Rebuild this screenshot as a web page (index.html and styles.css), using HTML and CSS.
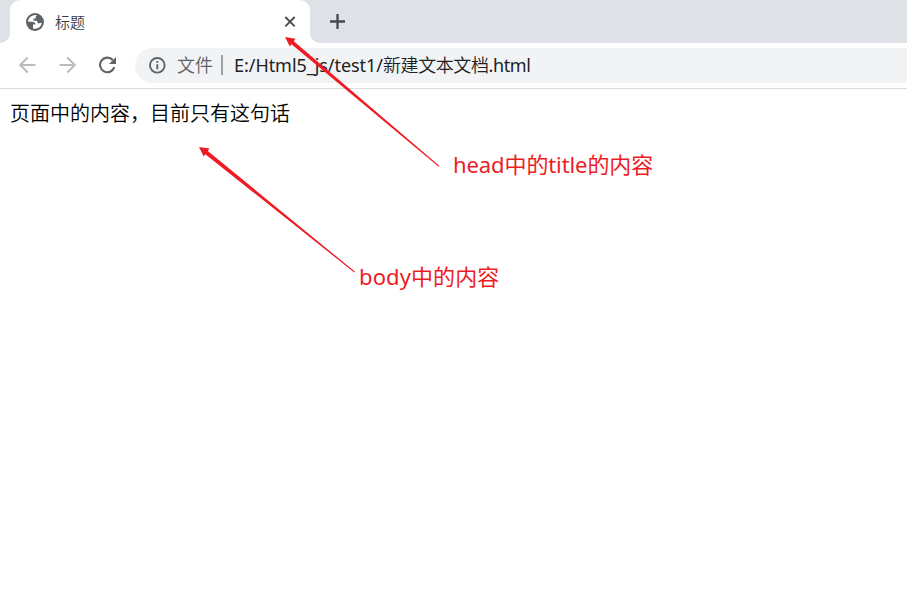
FILE: index.html
```html
<!DOCTYPE html>
<html lang="zh-CN">
<head>
<meta charset="utf-8">
<title>标题</title>
<link rel="stylesheet" href="styles.css">
</head>
<body>
<div class="window">
  <header class="tab-strip">
    <div class="tab">
      <svg class="globe" viewBox="0 0 18 18"><circle cx="9" cy="9" r="9" fill="#5f6368"/><path d="M8.2 2.2C4.8 2.5 2.1 5.4 2.1 8.8h4.2c1.8 0 3.1 1.1 3.1 2.7H7v3.9c.7.3 1.3.4 2 .4 3.5 0 6.5-2.7 6.8-6.2-.8.6-1.6.7-2.7.7-1.6 0-2-1.2-2-2.6H7.5V5.5h2.2V4c0-1 .6-1.5 1.4-1.7-.9-.2-1.9-.3-2.9-.1Z" fill="#fff"/></svg>
      <span class="tab-title">标题</span>
      <svg class="close" viewBox="0 0 12 12"><path d="M1.3 1l9.4 9.4M10.7 1L1.3 10.4" fill="none" stroke="#46494d" stroke-width="1.8"/></svg>
    </div>
    <svg class="foot foot-left" viewBox="0 0 10 10"><path d="M10 0v10H0A10 10 0 0 0 10 0Z" fill="#fff"/></svg>
    <svg class="foot foot-right" viewBox="0 0 10 10"><path d="M0 0v10h10A10 10 0 0 1 0 0Z" fill="#fff"/></svg>
    <svg class="plus" viewBox="0 0 16 16"><path d="M8.5 1v15M1 8.5h15" stroke="#46494d" stroke-width="2.3"/></svg>
  </header>
  <nav class="toolbar">
    <svg class="nav-icon" viewBox="0 0 18 18"><path d="M17.5 9H2.5M9.7 1.5L2.2 9l7.5 7.5" fill="none" stroke="#b9bbbe" stroke-width="2"/></svg>
    <svg class="nav-icon" viewBox="0 0 18 18"><path d="M1.5 9h15M9.3 1.5L16.8 9l-7.5 7.5" fill="none" stroke="#b9bbbe" stroke-width="2"/></svg>
    <svg class="nav-icon" viewBox="0 0 18 18"><path d="M16.3 11.2A7.3 7.3 0 1 1 14.8 4" fill="none" stroke="#5f6368" stroke-width="2.1"/><path d="M18 1v7h-7Z" fill="#5f6368"/></svg>
    <div class="address">
      <svg class="info" viewBox="0 0 18 18"><circle cx="9.3" cy="9.3" r="7.3" fill="none" stroke="#5f6368" stroke-width="1.9"/><path d="M9.3 8.2v5M9.3 5v1.8" stroke="#5f6368" stroke-width="1.9"/></svg>
      <span class="scheme">文件</span>
      <span class="divider"></span>
      <span class="url">E:/Html5_js/test1/<span class="url-name">新建文本文档</span><span class="url-ext">.html</span></span>
    </div>
  </nav>
  <main class="page"><p class="sentence">页面中的内容，目前只有这句话</p></main>
  <svg class="arrows" viewBox="0 0 907 591"><g fill="#ed1c24"><path d="M285 37l10.5 1.8-1.7 2.5L439.5 166l-.8.8L291.5 44.2l-1.7 2.4Z"/><path d="M199 147l10.5 1.5-1.7 2.5L354.8 271.6l-.6.8L205.3 154.2l-1.6 2.4Z"/></g></svg>
  <span class="note note-title">head中的title的内容</span>
  <span class="note note-body">body中的内容</span>
</div>
</body>
</html>
```
FILE: styles.css
```css
* { box-sizing: border-box; }
body {
  margin: 0;
  background: #fff;
  font-family: "Noto Sans", "Noto Sans CJK SC", sans-serif;
}
svg { display: block; flex: none; }
.window {
  position: relative;
  width: 907px;
  height: 591px;
  overflow: hidden;
}
.tab-strip {
  position: relative;
  display: flex;
  height: 43px;
  padding-left: 10px;
  background: #dee1e6;
}
.tab {
  display: flex;
  align-items: center;
  width: 300px;
  padding: 0 14px 0 16px;
  border-radius: 10px 10px 0 0;
  background: #fff;
}
.globe { width: 18px; height: 18px; }
.tab-title {
  margin-left: 11px;
  font: 350 15px/20px "Noto Sans CJK SC", sans-serif;
  color: #3c4043;
}
.close { width: 12px; height: 12px; margin-left: auto; }
.foot { position: absolute; bottom: 0; width: 10px; height: 10px; }
.foot-left { left: 0; }
.foot-right { left: 310px; }
.plus { width: 16px; height: 16px; margin: 13px 0 0 19px; }
.toolbar {
  display: flex;
  align-items: center;
  gap: 22px;
  height: 46px;
  padding: 0 0 1px 18px;
  border-bottom: 1px solid #dadce0;
}
.nav-icon { width: 18px; height: 18px; }
.address {
  display: flex;
  flex: 1;
  align-items: center;
  height: 35px;
  margin-left: -3px;
  padding-left: 13px;
  border-radius: 18px 0 0 18px;
  background: #f1f3f4;
  white-space: nowrap;
}
.info { width: 18px; height: 18px; }
.scheme { margin-left: 11px; font-size: 18px; font-weight: 350; line-height: 26px; color: #5f6368; }
.divider { width: 2px; height: 20px; margin: 0 11px 0 8px; background: #9aa0a6; }
.url { font-size: 18px; line-height: 26px; letter-spacing: -0.05px; color: #202124; }
.url-name { font-weight: 350; letter-spacing: -0.4px; }
.url-ext { letter-spacing: -0.4px; }
.page { padding: 10px; }
.sentence { margin: 0; font: 350 20px/28px "Noto Sans CJK SC", sans-serif; color: #000; }
.arrows { position: absolute; inset: 0; width: 907px; height: 591px; }
.note { position: absolute; font-size: 22px; line-height: 30px; white-space: nowrap; color: #ed1c24; }
.note-title { left: 453px; top: 149px; letter-spacing: -0.1px; }
.note-body { left: 359px; top: 261px; letter-spacing: 0.1px; }
```
